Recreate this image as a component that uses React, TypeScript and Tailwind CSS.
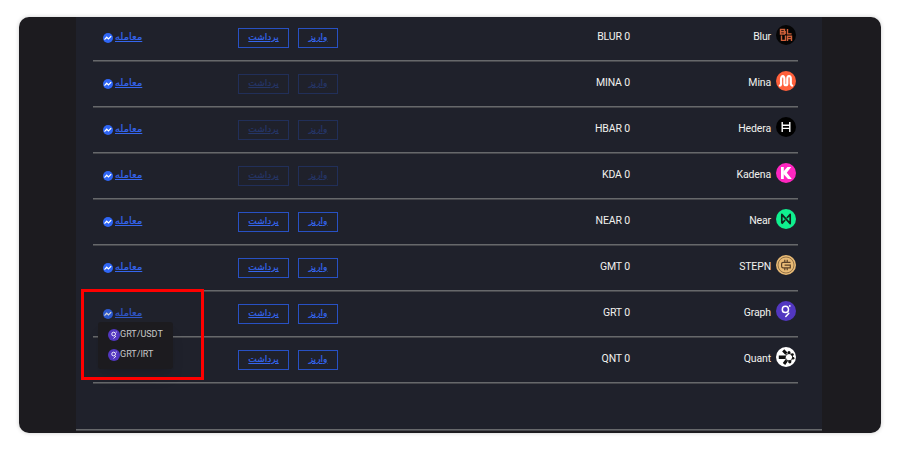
import type { ReactNode } from 'react';
import clsx from 'clsx';

const BlurIcon = () => (
  <svg viewBox="0 0 20 20" className="size-5">
    <circle cx="10" cy="10" r="10" fill="#050505" />
    <g fill="none" stroke="#d0603a" strokeWidth="1.4">
      <path d="M4.5 4.5H8.5V9H4.5ZM4.5 6.7H9.2V9" />
      <path d="M11.5 4V8.9H15.6" />
      <path d="M5.5 10.6V15.4H9.5V10.6" />
      <path d="M11.5 16V11.2H15.5V16M11.5 13.5H15.5" />
    </g>
  </svg>
);

const MinaIcon = () => (
  <svg viewBox="0 0 20 20" className="size-5">
    <circle cx="10" cy="10" r="10" fill="#ff603b" />
    <path
      d="M3.8 14.6C5.6 14.6 5 12 5 9C5 4 8.4 4 8.4 8V12.4Q8.4 14.2 9.9 14.2Q11.3 14.2 11.3 12.4V8C11.3 4 14.8 4 14.8 8C14.8 12 14.4 14.6 16.2 14.6"
      fill="none"
      stroke="#fff"
      strokeWidth="2.2"
      strokeLinecap="round"
    />
  </svg>
);

const HederaIcon = () => (
  <svg viewBox="0 0 20 20" className="size-5">
    <circle cx="10" cy="10" r="10" fill="#000" />
    <path d="M6.2 5V15M13.8 5V15M6.2 8.3H13.8M6.2 11.4H13.8" stroke="#fff" strokeWidth="1.4" />
  </svg>
);

const KadenaIcon = () => (
  <svg viewBox="0 0 20 20" className="size-5">
    <circle cx="10" cy="10" r="10" fill="#ff26c0" />
    <path d="M6.4 4V16" stroke="#fff" strokeWidth="2.8" />
    <path d="M11.4 4H15.2L10.8 9.8L15.8 16H12L7.2 10.8V8.8Z" fill="#fff" />
  </svg>
);

const NearIcon = () => (
  <svg viewBox="0 0 20 20" className="size-5">
    <circle cx="10" cy="10" r="10" fill="#10f08f" />
    <path d="M5.8 14.6V5.4L14.2 14.6V5.4L10.9 9M5.8 14.6L9.1 11" fill="none" stroke="#10251d" strokeWidth="1.7" strokeLinejoin="round" />
  </svg>
);

const StepnIcon = () => (
  <svg viewBox="0 0 20 20" className="size-5">
    <circle cx="10" cy="10" r="10" fill="#e8ba75" />
    <circle cx="10" cy="10" r="8" fill="none" stroke="#7d5f3c" strokeWidth="0.8" />
    <path
      d="M14.5 7.3H7.2Q5.6 7.3 5.6 8.8V11.2Q5.6 12.8 7.2 12.8H14.3V10.1H8.6M8.8 4.8V7.2M11.2 4.8V7.2M8.8 12.8V15.2M11.2 12.8V15.2"
      fill="none"
      stroke="#5b4229"
      strokeWidth="1.2"
    />
  </svg>
);

const GraphIcon = ({ className = 'size-5' }: { className?: string }) => (
  <svg viewBox="0 0 20 20" className={className}>
    <circle cx="10" cy="10" r="10" fill="#5237c0" />
    <circle cx="9.4" cy="8.4" r="3.1" fill="none" stroke="#fff" strokeWidth="1.5" />
    <circle cx="13.8" cy="4.9" r="0.85" fill="#fff" />
    <path d="M12.8 12.2L9.8 15.4" stroke="#fff" strokeWidth="1.5" strokeLinecap="round" />
  </svg>
);

const QuantIcon = () => (
  <svg viewBox="0 0 20 20" className="size-5">
    <circle cx="10" cy="10" r="10" fill="#fff" />
    <path d="M2.8 10.2H9" stroke="#111" strokeWidth="3.4" />
    <path d="M7.2 3.4L10.4 6.6M10.6 13.4L8 17" stroke="#111" strokeWidth="3" />
    <g fill="#111">
      <circle cx="13" cy="5.6" r="1.5" />
      <circle cx="16.4" cy="7.6" r="1.4" />
      <circle cx="17.2" cy="11.2" r="1.2" />
      <circle cx="13.8" cy="14.8" r="1.6" />
    </g>
    <circle cx="13" cy="10.2" r="3.7" fill="none" stroke="#111" strokeWidth="0.9" />
  </svg>
);

const TradeIcon = () => (
  <svg viewBox="0 0 10 10" className="size-2.5">
    <circle cx="5" cy="5" r="5" fill="#2f66f5" />
    <path d="M1.5 6.6L3.7 4.2L5.5 5.9L8.2 3.1" fill="none" stroke="#fff" strokeWidth="1.2" />
  </svg>
);

type Coin = {
  name: string;
  symbol: string;
  icon: ReactNode;
  disabled?: boolean;
  open?: boolean;
  tradable?: boolean;
};

const coins: Coin[] = [
  { name: 'Blur', symbol: 'BLUR', icon: <BlurIcon /> },
  { name: 'Mina', symbol: 'MINA', icon: <MinaIcon />, disabled: true },
  { name: 'Hedera', symbol: 'HBAR', icon: <HederaIcon />, disabled: true },
  { name: 'Kadena', symbol: 'KDA', icon: <KadenaIcon />, disabled: true },
  { name: 'Near', symbol: 'NEAR', icon: <NearIcon /> },
  { name: 'STEPN', symbol: 'GMT', icon: <StepnIcon /> },
  { name: 'Graph', symbol: 'GRT', icon: <GraphIcon />, open: true },
  { name: 'Quant', symbol: 'QNT', icon: <QuantIcon />, tradable: false },
];

const markets = ['GRT/USDT', 'GRT/IRT'];

function ActionButton({ label, disabled, className }: { label: string; disabled?: boolean; className: string }) {
  return (
    <button
      disabled={disabled}
      className={clsx(
        "flex h-5 items-center justify-center border border-[#2851c4] font-['DejaVu_Sans',sans-serif] text-[9px] leading-none text-[#3566ee] underline underline-offset-1 [-webkit-text-stroke:0.2px]",
        disabled && 'opacity-30',
        className
      )}
    >
      {label}
    </button>
  );
}

function CoinRow({ coin }: { coin: Coin }) {
  const { name, symbol, icon, disabled, open, tradable = true } = coin;

  return (
    <div className="flex h-[46px] items-center border-b border-[#66686b] shadow-[0_1px_0_#45464b]">
      {/* Trade */}
      <div className="relative w-[145px] pl-[10px]">
        {tradable && (
          <a
            className={clsx(
              "flex items-center gap-[2px] font-['DejaVu_Sans',sans-serif] text-[10px] leading-none text-[#3566ee] underline [-webkit-text-stroke:0.2px]",
              open && 'opacity-80'
            )}
          >
            <TradeIcon />
            <span className="-mt-px">معامله</span>
          </a>
        )}
        {/* Market menu */}
        {open && (
          <div className="absolute top-[13px] left-[5px] z-10 flex h-[47px] w-[75px] flex-col justify-center gap-2 rounded-[3px] bg-[#1c1b1f] pl-[10px] shadow-lg">
            {markets.map((m) => (
              <div key={m} className="flex h-3 items-center text-[9px] tracking-normal text-[#c9c9c9]">
                <GraphIcon className="size-3" />
                {m}
              </div>
            ))}
          </div>
        )}
      </div>

      <div className="flex gap-[9px]">
        <ActionButton label="برداشت" disabled={disabled} className="w-[51px]" />
        <ActionButton label="واریز" disabled={disabled} className="w-10" />
      </div>

      <div className="w-[292px] pb-[2px] text-right">{symbol} 0</div>
      <div className="flex flex-1 items-center justify-end gap-[5px] pr-[2px] pb-[5px]">
        <span className="pt-[3px]">{name}</span>
        {icon}
      </div>
    </div>
  );
}

export default function App() {
  return (
    <div className="h-[450px] w-[900px] overflow-hidden bg-white px-[19px] pt-[17px] font-[Roboto,sans-serif] text-[10.5px] tracking-[-0.15px] text-[#f1f1ee]">
      <div className="relative h-[416px] w-[862px] overflow-hidden rounded-[10px] bg-[#1c1b1f] pr-[59px] pl-[57px] shadow-[0_0_4px_rgba(0,0,0,0.2)]">
        {/* Wallet panel, first row runs under the top edge */}
        <div className="-mt-[2px] h-[415px] border-b border-[#66686b] bg-[#1f212b] pr-6 pl-[17px] shadow-[0_1px_0_#45464b]">
          {coins.map((coin) => (
            <CoinRow key={coin.symbol} coin={coin} />
          ))}
        </div>
        {/* Highlight around the open menu */}
        <div className="absolute top-[272px] left-[62px] z-20 h-[91px] w-[123px] border-3 border-[#ff0000]" />
      </div>
    </div>
  );
}
